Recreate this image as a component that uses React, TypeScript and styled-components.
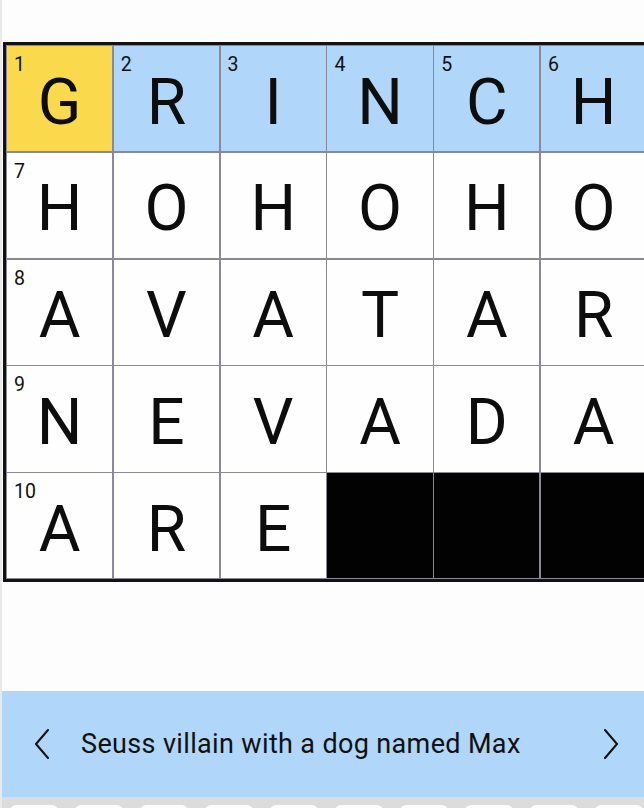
import React from "react";
import styled, { createGlobalStyle } from "styled-components";

const GlobalStyle = createGlobalStyle`
  html, body {
    margin: 0;
    padding: 0;
    overflow: hidden;
    background: #fdfdfd;
  }
  body {
    font-family: Roboto, "Liberation Sans", sans-serif;
  }
`;

const Page = styled.div`
  width: 644px;
  height: 808px;
  box-sizing: border-box;
  border-left: 2px solid #e9e9e9;
  background: #fdfdfd;
  display: flex;
  flex-direction: column;
  overflow: hidden;
`;

const Board = styled.div`
  margin-top: 42px;
  margin-left: 1px;
  width: max-content;
  border: 3px solid #121212;
  padding: 1px;
  background: #8a899a;
  display: grid;
  grid-template-columns: repeat(6, 105.3px);
  grid-auto-rows: 105.3px;
  gap: 1.5px;
`;

type Tone = "selected" | "word" | "plain" | "block";

const toneBg: Record<Tone, string> = {
  selected: "#fbd94c",
  word: "#b0d6f9",
  plain: "#fefefe",
  block: "#020202",
};

const Cell = styled.div<{ $tone: Tone }>`
  position: relative;
  background: ${(p) => toneBg[p.$tone]};
  display: flex;
  align-items: center;
  justify-content: center;
  padding-top: 8px;
  box-sizing: border-box;
`;

const Num = styled.span`
  position: absolute;
  top: 9px;
  left: 7px;
  font-size: 19.5px;
  line-height: 1;
  color: #111;
`;

const Letter = styled.span`
  font-size: 64px;
  line-height: 1;
  color: #0d0d0d;
`;

const Spacer = styled.div`
  flex: 1;
`;

const ClueBar = styled.div`
  height: 106px;
  flex-shrink: 0;
  background: #b0d6f9;
  display: flex;
  align-items: center;
  padding: 0 24px 0 31px;
`;

const ChevronButton = styled.div`
  width: 18px;
  height: 32px;
  display: flex;
  align-items: center;
  justify-content: center;
  flex-shrink: 0;
`;

const ClueText = styled.div`
  flex: 1;
  padding-left: 30px;
  font-size: 27px;
  letter-spacing: 0.35px;
  color: #111;
  white-space: nowrap;
`;

const Keyboard = styled.div`
  height: 11px;
  flex-shrink: 0;
  background: #dcdcdc;
  display: flex;
  gap: 17px;
  padding: 8px 0 0 8px;
  box-sizing: border-box;
  overflow: hidden;
`;

const Key = styled.div`
  width: 48px;
  height: 40px;
  flex-shrink: 0;
  border-radius: 6px;
  background: #fdfdfd;
`;

const Chevron = ({ dir }: { dir: "left" | "right" }) => (
  <svg width="16" height="30" viewBox="0 0 16 30" fill="none">
    <path
      d={dir === "left" ? "M14 1 L2 15 L14 29" : "M2 1 L14 15 L2 29"}
      stroke="#111"
      strokeWidth="2"
      strokeLinecap="round"
      strokeLinejoin="round"
    />
  </svg>
);

const rows: string[] = ["GRINCH", "HOHOHO", "AVATAR", "NEVADA", "ARE###"];
const numbers: Record<string, number> = {
  "0-0": 1,
  "0-1": 2,
  "0-2": 3,
  "0-3": 4,
  "0-4": 5,
  "0-5": 6,
  "1-0": 7,
  "2-0": 8,
  "3-0": 9,
  "4-0": 10,
};

export default function App() {
  return (
    <>
      <GlobalStyle />
      <Page>
        <Board>
          {rows.map((row, r) =>
            row.split("").map((ch, c) => {
              const tone: Tone =
                ch === "#" ? "block" : r === 0 ? (c === 0 ? "selected" : "word") : "plain";
              const n = numbers[`${r}-${c}`];
              return (
                <Cell key={`${r}-${c}`} $tone={tone}>
                  {n !== undefined && <Num>{n}</Num>}
                  {ch !== "#" && <Letter>{ch}</Letter>}
                </Cell>
              );
            })
          )}
        </Board>
        <Spacer />
        <ClueBar>
          <ChevronButton>
            <Chevron dir="left" />
          </ChevronButton>
          <ClueText>Seuss villain with a dog named Max</ClueText>
          <ChevronButton>
            <Chevron dir="right" />
          </ChevronButton>
        </ClueBar>
        <Keyboard>
          {Array.from({ length: 10 }).map((_, i) => (
            <Key key={i} />
          ))}
        </Keyboard>
      </Page>
    </>
  );
}
